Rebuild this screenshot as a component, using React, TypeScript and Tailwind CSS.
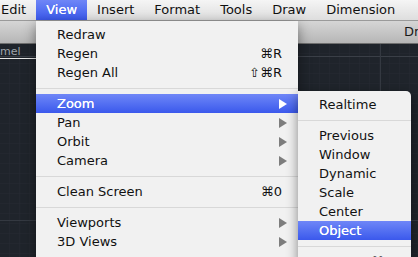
import React from "react";

type Item =
  | { type: "sep" }
  | { type: "item"; label: string; shortcut?: string; sub?: boolean; active?: boolean };

const viewMenu: Item[] = [
  { type: "item", label: "Redraw" },
  { type: "item", label: "Regen", shortcut: "⌘R" },
  { type: "item", label: "Regen All", shortcut: "⇧⌘R" },
  { type: "sep" },
  { type: "item", label: "Zoom", sub: true, active: true },
  { type: "item", label: "Pan", sub: true },
  { type: "item", label: "Orbit", sub: true },
  { type: "item", label: "Camera", sub: true },
  { type: "sep" },
  { type: "item", label: "Clean Screen", shortcut: "⌘0" },
  { type: "sep" },
  { type: "item", label: "Viewports", sub: true },
  { type: "item", label: "3D Views", sub: true },
];

const zoomMenu: Item[] = [
  { type: "item", label: "Realtime" },
  { type: "sep" },
  { type: "item", label: "Previous" },
  { type: "item", label: "Window" },
  { type: "item", label: "Dynamic" },
  { type: "item", label: "Scale" },
  { type: "item", label: "Center" },
  { type: "item", label: "Object", active: true },
  { type: "sep" },
  { type: "item", label: "In", shortcut: "⌘=" },
];

const menuBar = ["Edit", "View", "Insert", "Format", "Tools", "Draw", "Dimension"];

const Arrow = ({ active }: { active?: boolean }) => (
  <svg width="8" height="10" viewBox="0 0 8 10">
    <polygon points="0,0 8,5 0,10" fill={active ? "#ffffff" : "#7d7d7d"} />
  </svg>
);

const MenuRows = ({ items }: { items: Item[] }) => (
  <>
    {items.map((it, i) =>
      it.type === "sep" ? (
        <div key={i} className="h-[12px] flex items-center">
          <div className="w-full h-px bg-[#d8d8d8]" />
        </div>
      ) : (
        <div
          key={i}
          className={
            it.active
              ? "h-[19px] flex items-center justify-between pl-[21px] pr-[11px] bg-gradient-to-b from-[#6f86f7] to-[#3b58ec] text-white [text-shadow:0_0_0.6px_#fff]"
              : "h-[19px] flex items-center justify-between pl-[21px] pr-[11px] text-[#111]"
          }
        >
          <span className="whitespace-nowrap">{it.label}</span>
          {it.sub && <Arrow active={it.active} />}
          {it.shortcut && <span className="pr-[5px] whitespace-nowrap">{it.shortcut}</span>}
        </div>
      )
    )}
  </>
);

const Canvas = () => (
  <div className="relative flex-1 bg-[#1f242b] overflow-hidden">
    <svg className="absolute inset-0" width="418" height="213">
      <defs>
        <pattern id="minor" width="10" height="10" patternUnits="userSpaceOnUse">
          <path d="M10 0V10M0 10H10" stroke="#252a32" strokeWidth="1" fill="none" />
        </pattern>
      </defs>
      <rect width="418" height="213" fill="url(#minor)" />
      <line x1="0" y1="12.5" x2="418" y2="12.5" stroke="#3a3f47" />
      <line x1="0" y1="176.5" x2="418" y2="176.5" stroke="#343941" />
      <line x1="380.5" y1="0" x2="380.5" y2="213" stroke="#343941" />
    </svg>
    <div className="relative w-[36px] pt-[2px]">
      <div className="text-[11px] leading-[11px] text-[#9ea3aa] pl-[0px] whitespace-nowrap">mel</div>
      <div className="mt-[1px] h-px bg-[#e6e6e6]" />
    </div>
  </div>
);

export default function App() {
  return (
    <div className="relative w-[418px] h-[257px] overflow-hidden flex flex-col text-[13px] font-['DejaVu_Sans',sans-serif] bg-[#1f242b]">
      <div className="h-[21px] flex items-center bg-gradient-to-b from-[#f5f5f5] to-[#dedede] border-b border-[#9a9a9a] text-[#111]">
        {menuBar.map((m, i) => (
          <div
            key={m}
            className={
              m === "View"
                ? "h-full flex items-center px-[10px] bg-gradient-to-b from-[#6f86f7] to-[#3b58ec] text-white [text-shadow:0_0_0.6px_#fff]"
                : i === 0
                  ? "h-full flex items-center px-[10px] ml-[-9px]"
                  : "h-full flex items-center px-[10px]"
            }
          >
            {m}
          </div>
        ))}
      </div>
      <div className="h-[23px] flex items-center bg-gradient-to-b from-[#d6d6d6] to-[#b6b6b6] border-b border-[#6e6e6e] text-[#1a1a1a] overflow-hidden">
        <span className="ml-[404px] whitespace-nowrap">Drawing1.dwg</span>
      </div>
      <Canvas />

      <div className="absolute left-[36px] top-[21px] w-[262px] h-[250px] pt-[4px] bg-[#f1f1f1] shadow-[0_4px_12px_rgba(0,0,0,0.45)]">
        <MenuRows items={viewMenu} />
      </div>
      <div className="absolute left-[298px] top-[91px] w-[113px] h-[180px] pt-[4px] bg-[#f1f1f1] rounded-tr-[5px] shadow-[0_4px_12px_rgba(0,0,0,0.45)]">
        <MenuRows items={zoomMenu} />
      </div>
    </div>
  );
}
